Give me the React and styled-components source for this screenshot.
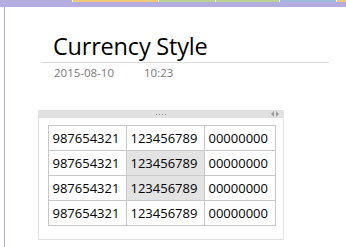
import React from 'react'
import styled, { createGlobalStyle } from 'styled-components'

const GlobalStyle = createGlobalStyle`
  html, body { margin: 0; padding: 0; background: #fff; }
  body { font-family: "Open Sans", "Liberation Sans", sans-serif; }
`

const tabs = [
  { w: 72, c: '#b4aee0' },
  { w: 85, c: '#f5c875' },
  { w: 56, c: '#bcd48f' },
  { w: 63, c: '#bcd48f' },
  { w: 56, c: '#9fb9df' },
  { w: 14, c: '#f5c875' },
]

const rows = [
  ['987654321', '123456789', '00000000'],
  ['987654321', '123456789', '00000000'],
  ['987654321', '123456789', '00000000'],
  ['987654321', '123456789', '00000000'],
]

const Page = styled.div`
  width: 346px;
  height: 247px;
  overflow: hidden;
  display: flex;
  flex-direction: column;
`

const TabStrip = styled.div`
  display: flex;
  gap: 1px;
  height: 2px;
  background: #fff;
`

const Tab = styled.div`
  width: ${p => p.$w}px;
  flex-shrink: 0;
  background: ${p => p.$c};
`

const PurpleBar = styled.div`
  height: 5px;
  background: #b4aee0;
`

const Body = styled.div`
  flex: 1;
  margin-left: 4px;
  border-left: 1.5px solid #b4aee0;
  display: flex;
  flex-direction: column;
`

const Header = styled.div`
  margin: 24px 0 0 36px;
  width: 288px;
`

const Title = styled.h1`
  margin: 0;
  padding-left: 12px;
  font-family: "Open Sans", "Liberation Sans", sans-serif;
  font-weight: 400;
  font-size: 23.5px;
  line-height: 31px;
  color: #000;
  border-bottom: 1px solid #dcdcdc;
  letter-spacing: -0.2px;
`

const Meta = styled.div`
  display: flex;
  gap: 30px;
  padding: 2px 0 0 13px;
  font-size: 11.5px;
  line-height: 16px;
  color: #7a7a7a;
`

const TableBox = styled.div`
  margin: 29px 0 0 32.5px;
  width: 244px;
  height: 129px;
  border: 1px solid #e1e1e1;
  border-top: none;
  display: flex;
  flex-direction: column;
`

const Handle = styled.div`
  height: 8px;
  margin: 0 -1px;
  background: #e1e1e1;
  position: relative;
  display: flex;
  justify-content: center;
  align-items: center;
`

const Dots = styled.div`
  display: flex;
  gap: 2px;
`

const Dot = styled.span`
  width: 1px;
  height: 1px;
  background: #8a8a8a;
`

const Arrows = styled.svg`
  position: absolute;
  right: 5px;
  top: 1px;
`

const Grid = styled.table`
  margin: 7px 0 0 9px;
  width: 227px;
  table-layout: fixed;
  border-collapse: collapse;
  font-size: 13px;
  color: #000;
`

const Cell = styled.td`
  border: 1px solid #c8c8c8;
  height: 24px;
  padding: 0 0 0 4px;
  background: ${p => (p.$hl ? '#e3e3e3' : '#fff')};
  white-space: nowrap;
  overflow: hidden;
  line-height: 20px;
`

const Col = styled.col`
  width: ${p => p.$w}px;
`

const widths = [78, 78, 71]

export default function App() {
  return (
    <>
      <GlobalStyle />
      <Page>
        <TabStrip>
          {tabs.map((t, i) => (
            <Tab key={i} $w={t.w} $c={t.c} />
          ))}
        </TabStrip>
        <PurpleBar />
        <Body>
          <Header>
            <Title>Currency Style</Title>
            <Meta>
              <span>2015-08-10</span>
              <span>10:23</span>
            </Meta>
          </Header>
          <TableBox>
            <Handle>
              <Dots>
                <Dot />
                <Dot />
                <Dot />
                <Dot />
              </Dots>
              <Arrows width="8" height="6" viewBox="0 0 8 6">
                <path d="M3 0 L0 3 L3 6 Z" fill="#9a9a9a" />
                <path d="M5 0 L8 3 L5 6 Z" fill="#9a9a9a" />
              </Arrows>
            </Handle>
            <Grid>
              <colgroup>
                {widths.map((w, i) => (
                  <Col key={i} $w={w} />
                ))}
              </colgroup>
              <tbody>
                {rows.map((r, i) => (
                  <tr key={i}>
                    {r.map((v, j) => (
                      <Cell key={j} $hl={j === 1 && (i === 1 || i === 2)}>
                        {v}
                      </Cell>
                    ))}
                  </tr>
                ))}
              </tbody>
            </Grid>
          </TableBox>
        </Body>
      </Page>
    </>
  )
}
